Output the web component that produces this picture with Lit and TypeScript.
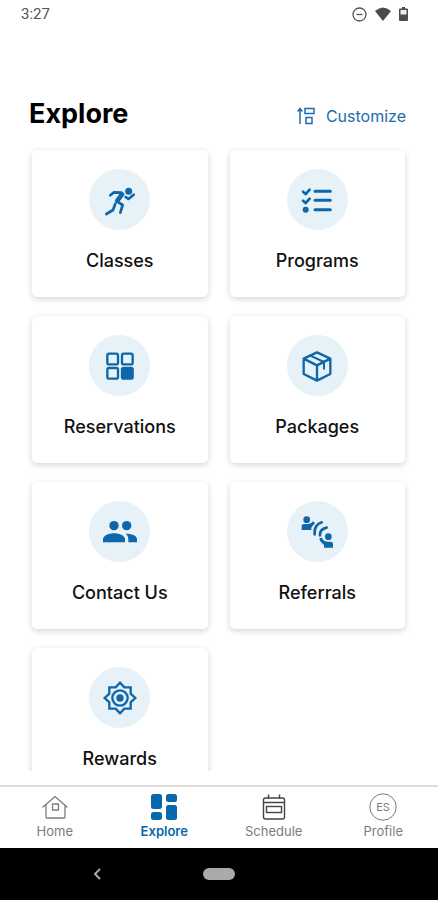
import { LitElement, html, css, svg, TemplateResult } from "lit";
import { customElement } from "lit/decorators.js";
import { classMap } from "lit/directives/class-map.js";

type Art = TemplateResult;

const runner = svg`<g fill="none" stroke="currentColor" stroke-width="8" stroke-linecap="round" stroke-linejoin="round">
  <path d="M25 40 36 31 58 32"/>
  <path d="M60 37 46 56" stroke-width="14"/>
  <path d="M71 45 79 51 95 38"/>
  <path d="M46 59 62 69 55 92"/>
  <path d="M40 65 33 84 13 96"/></g>
  <circle cx="80" cy="28" r="10.5" fill="currentColor"/>`;

const checklist = svg`<g fill="none" stroke="currentColor" stroke-width="9" stroke-linecap="round" stroke-linejoin="round">
  <path d="M48 28H94M48 55H94M48 83H94"/>
  <path d="M12 29 20 36 32 23M12 56 20 63 32 50" stroke-width="8"/></g>
  <circle cx="20" cy="83" r="9" fill="currentColor"/>`;

const tiles = svg`<g fill="none" stroke="currentColor" stroke-width="7">
  <rect x="16" y="17" width="32" height="32" rx="5"/><rect x="60" y="17" width="32" height="32" rx="5"/>
  <rect x="16" y="60" width="32" height="32" rx="5"/><rect x="60" y="60" width="32" height="32" rx="5" fill="currentColor"/></g>`;

const box = svg`<g fill="none" stroke="currentColor" stroke-width="7" stroke-linejoin="round" stroke-linecap="round">
  <path d="M54 13 94 32V78L54 98 14 78V32ZM14 32 54 52 94 32M54 52V98"/>
  <path d="M34 23 75 42V62" stroke-width="6"/></g>`;

const people = svg`<g fill="currentColor">
  <circle cx="36" cy="35" r="14"/><circle cx="74" cy="35" r="14"/>
  <path d="M3 85V76C3 64 22 58 36 58S69 64 69 76V85Z"/>
  <path d="M71 59C88 59 105 64 105 76V85H79V76C79 68 76 63 71 59Z"/></g>`;

const referral = svg`<g fill="currentColor">
  <circle cx="23" cy="17" r="10"/><path d="M8 48V36C8 30 14 30 23 30 32 31 37 28 42 22L48 27C44 34 38 37 37 42V48Z"/>
  <circle cx="88" cy="68" r="10"/><path d="M102 101V89C102 83 96 83 88 83 79 83 73 80 69 71L61 73C63 84 70 89 75 93V101Z"/></g>
  <g fill="none" stroke="currentColor" stroke-width="8" stroke-linecap="round">
  <path d="M47 61C45 43 54 30 68 25M63 64C62 52 70 44 83 41"/></g>`;

const reward = svg`<g fill="none" stroke="currentColor" stroke-width="7" stroke-linejoin="miter">
  <path d="M54 8 67 22H86V41L100 54 86 67V86H67L54 100 41 86H22V67L8 54 22 41V22H41Z"/>
  <circle cx="54" cy="54" r="23"/></g><circle cx="54" cy="54" r="11" fill="currentColor"/>`;

const cards: { label: string; art: Art }[] = [
  { label: "Classes", art: runner },
  { label: "Programs", art: checklist },
  { label: "Reservations", art: tiles },
  { label: "Packages", art: box },
  { label: "Contact Us", art: people },
  { label: "Referrals", art: referral },
  { label: "Rewards", art: reward },
];

const tabs: { label: string; art: Art; active?: boolean }[] = [
  {
    label: "Home",
    art: svg`<g fill="none" stroke="currentColor" stroke-width="1.3" stroke-linejoin="round" stroke-linecap="round">
      <path d="M2 14 14 3.500 26 14M5 12V24Q5 25 6 25H23Q24 25 24 24V12"/><rect x="11.500" y="11" width="6" height="6"/></g>`,
  },
  {
    label: "Explore",
    active: true,
    art: svg`<g fill="currentColor"><rect x="1" y="1" width="11" height="15" rx="2.500"/><rect x="16" y="1" width="11" height="8" rx="2.500"/>
      <rect x="1" y="19" width="11" height="8" rx="2.500"/><rect x="16" y="12" width="11" height="15" rx="2.500"/></g>`,
  },
  {
    label: "Schedule",
    art: svg`<g fill="none" stroke="#444" stroke-width="1.4"><rect x="3.500" y="5" width="21" height="21" rx="2"/>
      <path d="M3.500 9.500H24.500M8.500 1.500V6M19.500 1.500V6"/><rect x="6.500" y="13.500" width="15" height="6"/></g>`,
  },
  {
    label: "Profile",
    art: svg`<circle cx="14" cy="14" r="13.200" fill="none" stroke="currentColor"/>
      <text x="14" y="18" text-anchor="middle" font-size="11" fill="currentColor">ES</text>`,
  },
];

@customElement("app-root")
export class AppRoot extends LitElement {
  static styles = css`
    :host {
      display: flex;
      flex-direction: column;
      height: 100vh;
      background: #fff;
      color: #111;
      font-family: Inter, "Open Sans", sans-serif;
    }
    svg {
      display: block;
      flex: none;
    }
    button {
      font: inherit;
      color: inherit;
      border: 0;
      padding: 0;
      background: none;
      cursor: pointer;
    }
    .status {
      display: flex;
      align-items: center;
      justify-content: space-between;
      height: 28px;
      padding: 0 30px 0 21px;
      color: #555;
      font: 15px/28px Roboto, sans-serif;
    }
    .signals {
      display: flex;
      align-items: center;
      gap: 8px;
    }
    .heading {
      display: flex;
      align-items: center;
      justify-content: space-between;
      padding: 68px 32px 14px 29px;
    }
    h1 {
      margin: 0;
      font-size: 27px;
      line-height: 36px;
      font-weight: 700;
      color: #000;
    }
    .customize {
      display: flex;
      align-items: center;
      gap: 11px;
      color: #1c6cae;
      font-size: 16px;
      line-height: 24px;
      padding-top: 4px;
    }
    main {
      flex: 1;
      min-height: 0;
      overflow-y: auto;
      scrollbar-width: none;
      margin-bottom: 14px;
    }
    .grid {
      display: grid;
      grid-template-columns: 1fr 1fr;
      gap: 19px 22px;
      padding: 4px 33px 19px 32px;
    }
    .card {
      display: flex;
      flex-direction: column;
      align-items: center;
      gap: 19px;
      padding: 19px 0 24px;
      border-radius: 5px;
      background: #fff;
      box-shadow: 0 2px 6px rgba(0, 0, 0, 0.17);
      font-size: 18px;
      line-height: 24px;
      font-weight: 500;
    }
    .disc {
      display: grid;
      place-items: center;
      width: 61px;
      height: 61px;
      border-radius: 50%;
      background: #e7f1f8;
      color: #0f66a8;
    }
    .tabs {
      display: grid;
      grid-template-columns: repeat(4, 1fr);
      border-top: 2px solid #dedede;
      padding: 6px 0 8px;
    }
    .tab {
      display: flex;
      flex-direction: column;
      align-items: center;
      gap: 2px;
      color: #7c7c7c;
      font-size: 13px;
      line-height: 17px;
      text-decoration: none;
    }
    .tab.active {
      color: #0768ad;
      font-weight: 600;
    }
    .system {
      display: grid;
      grid-template-columns: 1fr 32px 1fr;
      align-items: center;
      height: 52px;
      background: #000;
      color: #aaa;
    }
    .back {
      justify-self: center;
      padding-right: 10px;
    }
    .pill {
      height: 12px;
      border-radius: 6px;
      background: #aaa;
    }
  `;

  render() {
    return html`
      <div class="status">
        <span>3:27</span>
        <div class="signals">
          <svg width="15" height="15" viewBox="0 0 15 15" fill="none" stroke="#555" stroke-width="1.3">
            <circle cx="7.500" cy="7.500" r="6.500" /><path d="M4.500 7.500H10.500" />
          </svg>
          <svg width="16" height="14" viewBox="0 0 16 14" fill="#4b4b4b"><path d="M0 4Q8-3 16 4L8 14Z" /></svg>
          <svg width="9" height="14" viewBox="0 0 9 14">
            <path d="M3 0H6V1.500H8Q9 1.500 9 2.500V13Q9 14 8 14H1Q0 14 0 13V2.500Q0 1.500 1 1.500H3Z" fill="#4b4b4b" />
            <path d="M1.500 3H7.500V7.500H1.500Z" fill="#eee" />
          </svg>
        </div>
      </div>
      <header class="heading">
        <h1>Explore</h1>
        <button class="customize">
          <svg width="18" height="18" viewBox="0 0 18 18" fill="none" stroke="currentColor" stroke-width="1.5">
            <path d="M3 17V2M.5 4.500 3 1.500 5.500 4.500" />
            <rect x="8" y="1.500" width="9" height="5" /><rect x="9" y="10.500" width="6" height="6" />
          </svg>
          Customize
        </button>
      </header>
      <main>
        <div class="grid">
          ${cards.map(
            (c) => html`<button class="card">
              <span class="disc"><svg width="36" height="36" viewBox="0 0 108 108" aria-hidden="true">${c.art}</svg></span>
              <span>${c.label}</span>
            </button>`
          )}
        </div>
      </main>
      <nav class="tabs">
        ${tabs.map(
          (t) => html`<a class=${classMap({ tab: true, active: !!t.active })} href="#${t.label.toLowerCase()}">
            <svg width="28" height="28" viewBox="0 0 28 28" aria-hidden="true">${t.art}</svg>
            <span>${t.label}</span>
          </a>`
        )}
      </nav>
      <div class="system">
        <button class="back" aria-label="Back">
          <svg width="8" height="12" viewBox="0 0 8 12" fill="none" stroke="currentColor" stroke-width="2"><path d="M7 1 2 6 7 11" /></svg>
        </button>
        <button class="pill" aria-label="Home screen"></button>
      </div>
    `;
  }
}
